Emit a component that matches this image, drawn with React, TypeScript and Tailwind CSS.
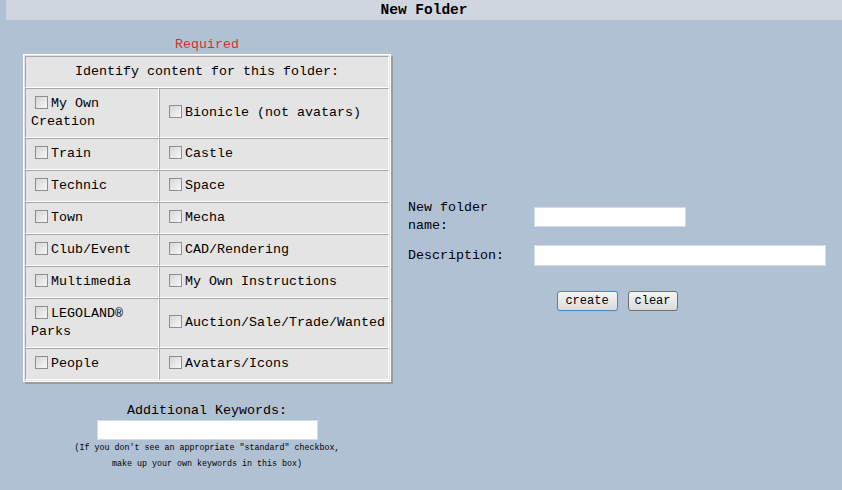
const leftItems = [
  ["My Own Creation", "Bionicle (not avatars)"],
  ["Train", "Castle"],
  ["Technic", "Space"],
  ["Town", "Mecha"],
  ["Club/Event", "CAD/Rendering"],
  ["Multimedia", "My Own Instructions"],
  ["LEGOLAND® Parks", "Auction/Sale/Trade/Wanted"],
  ["People", "Avatars/Icons"],
];

function Box() {
  return (
    <span className="ml-[4px] mr-[3px] inline-block h-[13px] w-[13px] align-[-2px] border border-[#8e8e8e] bg-gradient-to-br from-[#d6d6d6] to-[#f7f7f7]"></span>
  );
}

function App() {
  return (
    <div className="min-h-[490px] w-[842px] bg-[#b0c1d4] pl-[6px] font-['Liberation_Mono',monospace] text-[13.33px] text-black">
      <div className="flex h-[20px] items-center justify-center bg-[#d0d6e0] pt-[2px] text-[14.5px] font-bold">
        New Folder
      </div>
      <div className="flex items-center pt-[16px] pb-[16px]">
        <div className="flex w-[402px] flex-col items-center">
          <div className="leading-[18px] text-[#e8262e]">Required</div>
          <div className="w-[368px] border border-white bg-[#e4e4e4] p-[1px] shadow-[2px_2px_0_#9c9c9c]">
            <table className="w-full table-fixed border-separate border-spacing-0 leading-[18px]">
              <colgroup>
                <col className="w-[134px]" />
                <col />
              </colgroup>
              <tbody>
                <tr>
                  <td
                    colSpan={2}
                    className="h-[32px] border border-t-[#a8a8a8] border-l-[#a8a8a8] border-b-white border-r-white text-center"
                  >
                    Identify content for this folder:
                  </td>
                </tr>
                {leftItems.map(([a, b]) => (
                  <tr key={a}>
                    <td className="border border-t-[#a8a8a8] border-l-[#a8a8a8] border-b-white border-r-white px-[5px] py-[6px] align-middle">
                      <Box />
                      {a}
                    </td>
                    <td className="border border-t-[#a8a8a8] border-l-[#a8a8a8] border-b-white border-r-white pl-[5px] pr-[1px] py-[6px] align-middle whitespace-nowrap">
                      <Box />
                      {b}
                    </td>
                  </tr>
                ))}
              </tbody>
            </table>
          </div>
          <div className="mt-[20px] leading-[18px]">Additional Keywords:</div>
          <input
            type="text"
            className="h-[20px] w-[221px] border border-[#d4dbe4] bg-white outline-none"
          />
          <div className="text-center text-[8.33px] leading-[16px]">
            <div>(If you don't see an appropriate "standard" checkbox,</div>
            <div>make up your own keywords in this box)</div>
          </div>
        </div>
        <div className="flex w-[418px] flex-col pt-[2px]">
          <div className="flex items-center">
            <div className="mr-[6px] w-[120px] leading-[18px]">New folder name:</div>
            <input
              type="text"
              className="h-[20px] w-[152px] border border-[#d4dbe4] bg-white outline-none"
            />
          </div>
          <div className="mt-[10px] flex items-center">
            <div className="mr-[6px] w-[120px] leading-[18px]">Description:</div>
            <input
              type="text"
              className="h-[21px] w-[292px] border border-[#d4dbe4] bg-white outline-none"
            />
          </div>
          <div className="mt-[25px] flex justify-center gap-[10px]">
            <button className="h-[20px] w-[61px] rounded-[3px] border border-[#3d8ccb] bg-gradient-to-b from-[#f6f6f6] to-[#dadada] text-[12px] leading-none shadow-[0_0_1px_#5fa8e0]">
              create
            </button>
            <button className="h-[20px] w-[50px] rounded-[3px] border border-[#707070] bg-gradient-to-b from-[#f6f6f6] to-[#dadada] text-[12px] leading-none">
              clear
            </button>
          </div>
        </div>
      </div>
    </div>
  );
}

export default App;
